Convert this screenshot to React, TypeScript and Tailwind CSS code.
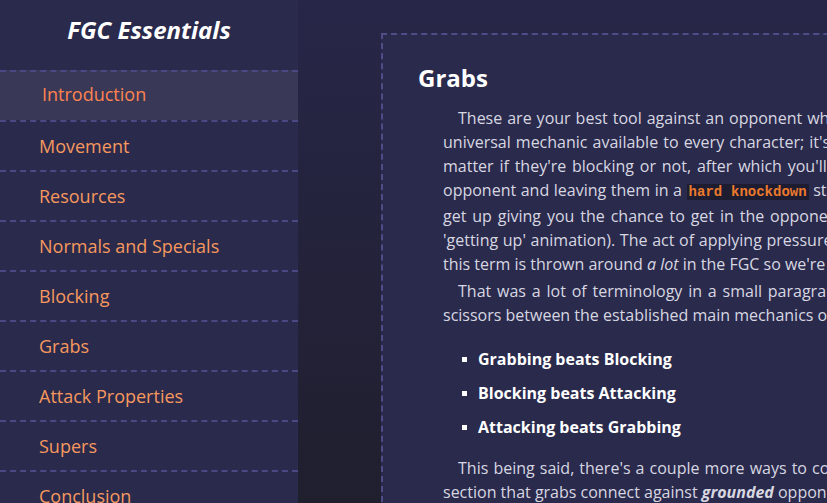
import React from "react";

const sections = [
  "Introduction",
  "Movement",
  "Resources",
  "Normals and Specials",
  "Blocking",
  "Grabs",
  "Attack Properties",
  "Supers",
  "Conclusion",
];

function Line({ children, last }: { children: React.ReactNode; last?: boolean }) {
  return (
    <span className={last ? "block text-left" : "block text-justify [text-align-last:justify]"}>
      {children}
    </span>
  );
}

function Sidebar() {
  return (
    <aside className="w-[298px] shrink-0 bg-[#2a2a4c] flex flex-col">
      <div className="h-[70px] shrink-0 pt-[14px] text-center">
        <h1 className="text-[24px] leading-[32px] font-bold italic text-white">FGC Essentials</h1>
      </div>
      <nav className="flex flex-col">
        {sections.map((s) => {
          const active = s === "Introduction";
          return (
            <a
              key={s}
              href="#"
              className={
                active
                  ? "h-[50px] shrink-0 border-t-2 border-dashed border-[#4b4983] bg-[#393957] flex items-center pl-[42px] pb-[3px] text-[18px] text-[#ff8250]"
                  : "h-[50px] shrink-0 border-t-2 border-dashed border-[#4b4983] flex items-center pl-[39px] text-[18px] text-[#f6985e]"
              }
            >
              {s}
            </a>
          );
        })}
      </nav>
    </aside>
  );
}

export default function App() {
  return (
    <div className="h-screen w-screen overflow-hidden flex font-['Open_Sans',sans-serif]">
      <Sidebar />
      <main className="flex-1 overflow-hidden bg-gradient-to-b from-[#272648] to-[#201f2e] pl-[83px] pt-[33px]">
        <article className="w-[760px] min-h-[600px] bg-[#2a2a4c] border-2 border-dashed border-[#4f4c88] pt-[28px] px-[35px]">
          <h2 className="text-[24px] leading-[30px] font-bold text-white">Grabs</h2>
          <div className="mt-[13px] ml-[25px] text-[16px] leading-[24px] text-[#d7d7e1]">
            <p>
              <Line>
                <span className="pl-[15px]" />
                These are your best tool against an opponent who is blocking, grabs (or throws) are a
              </Line>
              <Line>universal mechanic available to every character; it's a close range attack which lands no</Line>
              <Line>matter if they're blocking or not, after which you'll usually end up knocking down your</Line>
              <Line>
                opponent and leaving them in a{" "}
                <code className="font-['Liberation_Mono',monospace] font-bold text-[14px] text-[#ec7a2c] bg-[#1d1c31] px-[2px]">
                  hard knockdown
                </code>{" "}
                state, meaning that they can't instantly
              </Line>
              <Line>get up giving you the chance to get in the opponent's face whilst they're stuck in their</Line>
              <Line>'getting up' animation). The act of applying pressure on wake up is labelled okizeme and</Line>
              <Line last>
                this term is thrown around <em>a lot</em> in the FGC so we're looking at it in more detail later.
              </Line>
            </p>
            <p className="mt-[3px]">
              <Line>
                <span className="pl-[15px]" />
                That was a lot of terminology in a small paragraph, but the gist of it is a rock-paper-
              </Line>
              <Line last>scissors between the established main mechanics of fighting games:</Line>
            </p>
            <ul className="mt-[20px] flex flex-col gap-[10px] font-bold text-white">
              {["Grabbing beats Blocking", "Blocking beats Attacking", "Attacking beats Grabbing"].map((t) => (
                <li key={t} className="flex items-center gap-[11px] pl-[19px]">
                  <span className="w-[5px] h-[5px] bg-white shrink-0" />
                  {t}
                </li>
              ))}
            </ul>
            <p className="mt-[17px]">
              <Line>
                <span className="pl-[15px]" />
                This being said, there's a couple more ways to counter grabs, and we'll note in a later
              </Line>
              <Line last>
                section that grabs connect against <strong><em>grounded</em></strong> opponents only, so jumping away works.
              </Line>
            </p>
          </div>
        </article>
      </main>
    </div>
  );
}
